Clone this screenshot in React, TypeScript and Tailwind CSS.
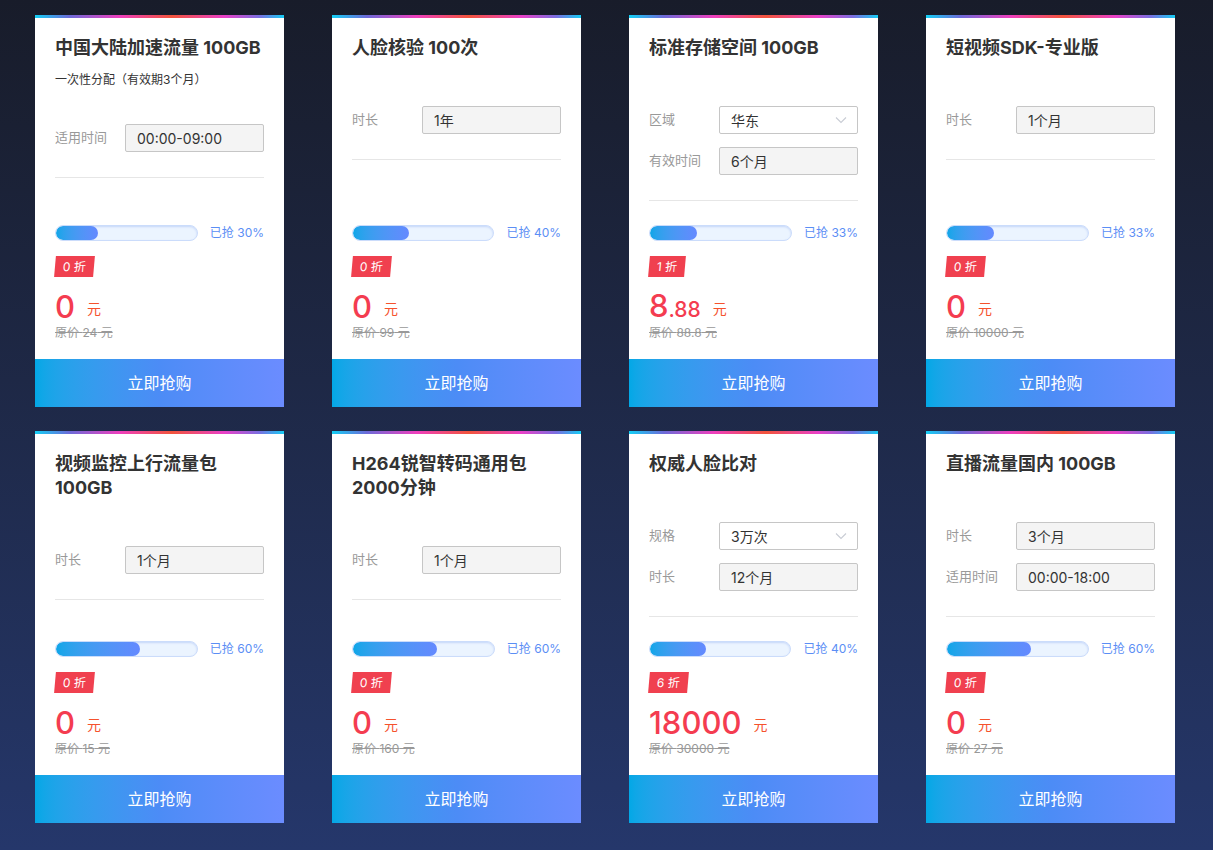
type Opt = { label: string; value: string; select?: boolean };

type Item = {
  title: string[];
  sub?: string;
  opts: Opt[];
  pct: number;
  off: string;
  price: string;
  decimal?: string;
  orig: string;
};

const items: Item[] = [
  {
    title: ["中国大陆加速流量 100GB"],
    sub: "一次性分配（有效期3个月）",
    opts: [{ label: "适用时间", value: "00:00-09:00" }],
    pct: 30,
    off: "0",
    price: "0",
    orig: "24",
  },
  {
    title: ["人脸核验 100次"],
    opts: [{ label: "时长", value: "1年" }],
    pct: 40,
    off: "0",
    price: "0",
    orig: "99",
  },
  {
    title: ["标准存储空间 100GB"],
    opts: [
      { label: "区域", value: "华东", select: true },
      { label: "有效时间", value: "6个月" },
    ],
    pct: 33,
    off: "1",
    price: "8",
    decimal: ".88",
    orig: "88.8",
  },
  {
    title: ["短视频SDK-专业版"],
    opts: [{ label: "时长", value: "1个月" }],
    pct: 33,
    off: "0",
    price: "0",
    orig: "10000",
  },
  {
    title: ["视频监控上行流量包", "100GB"],
    opts: [{ label: "时长", value: "1个月" }],
    pct: 60,
    off: "0",
    price: "0",
    orig: "15",
  },
  {
    title: ["H264锐智转码通用包", "2000分钟"],
    opts: [{ label: "时长", value: "1个月" }],
    pct: 60,
    off: "0",
    price: "0",
    orig: "160",
  },
  {
    title: ["权威人脸比对"],
    opts: [
      { label: "规格", value: "3万次", select: true },
      { label: "时长", value: "12个月" },
    ],
    pct: 40,
    off: "6",
    price: "18000",
    orig: "30000",
  },
  {
    title: ["直播流量国内 100GB"],
    opts: [
      { label: "时长", value: "3个月" },
      { label: "适用时间", value: "00:00-18:00" },
    ],
    pct: 60,
    off: "0",
    price: "0",
    orig: "27",
  },
];

const Chevron = () => (
  <svg width="12" height="8" viewBox="0 0 12 8" fill="none" className="mr-[10px]">
    <path d="M1 1.5l5 5 5-5" stroke="#c8ccd4" strokeWidth="1.1" />
  </svg>
);

const Card = ({ item }: { item: Item }) => {
  return (
    <div className="h-[392px] bg-white flex flex-col">
      <div className="h-[3px] bg-[linear-gradient(90deg,#13cff5_0%,#6d6ad8_14%,#ee3fbd_34%,#f2543c_55%,#e940c8_76%,#7a6ee0_90%,#16ccf4_100%)]" />
      <div className="px-5 pt-[18px]">
        {item.title.map((t) => (
          <div key={t} className="text-[18px] leading-[24px] font-bold text-[#333] whitespace-nowrap">
            {t}
          </div>
        ))}
        {item.sub && (
          <div className="mt-[11px] text-[12px] leading-[18px] text-[#333]">{item.sub}</div>
        )}
        <div className={item.sub ? "mt-[35px] flex flex-col gap-[13px]" : "mt-[46px] flex flex-col gap-[13px]"}>
          {item.opts.map((o) => (
            <div key={o.label} className="flex items-center">
              <div className="w-[70px] text-[13px] text-[#999]">{o.label}</div>
              <div
                className={
                  o.select
                    ? "flex-1 h-[28px] border border-[#c6c6c6] rounded-[2px] bg-white flex items-center justify-between pl-[11px] text-[14px] text-[#333]"
                    : "flex-1 h-[28px] border border-[#c6c6c6] rounded-[2px] bg-[#f4f4f4] flex items-center pl-[11px] text-[14px] text-[#333]"
                }
              >
                <span>{o.value}</span>
                {o.select && <Chevron />}
              </div>
            </div>
          ))}
        </div>
        <div className="mt-[25px] h-px bg-[#e6e6e6]" />
      </div>
      <div className="flex-1" />
      <div className="px-5 pb-[17px]">
        <div className="flex items-center gap-3">
          <div className="flex-1 h-[16px] rounded-full bg-[#ebf4ff] border border-[#cbdcfb] shadow-[inset_0_1px_2px_rgba(90,130,230,0.25)] overflow-hidden">
            <div
              className="h-full rounded-full bg-gradient-to-r from-[#0aa6e8] to-[#6489ff]"
              style={{ width: `${item.pct}%` }}
            />
          </div>
          <div className="text-[12px] text-[#5b8ef5] whitespace-nowrap">已抢 {item.pct}%</div>
        </div>
        <div className="mt-[14px] flex">
          <div className="h-[21px] px-[8px] bg-[#f0404f] -skew-x-[5deg] flex items-center text-[12px] text-white">
            {item.off} 折
          </div>
        </div>
        <div className="mt-[13px] flex items-center h-[34px] text-[#f43c50]">
          <div className="flex items-baseline">
            <span className="text-[31px] leading-[34px] font-medium">{item.price}</span>
            {item.decimal && <span className="text-[21px] font-medium">{item.decimal}</span>}
          </div>
          <span className="ml-3 mt-[2px] text-[14px] text-[#f5522d]">元</span>
        </div>
        <div className="text-[12px] leading-[18px] text-[#999] line-through">原价 {item.orig} 元</div>
      </div>
      <div className="h-[48px] bg-gradient-to-r from-[#02a8e6] via-[#4c8cf6] to-[#6b8cff] flex items-center justify-center text-white text-[16px]">
        立即抢购
      </div>
    </div>
  );
};

export default function App() {
  return (
    <div className="min-h-screen bg-gradient-to-b from-[#181c2a] to-[#25376b] pt-[15px] pl-[35px] font-['Inter','Noto_Sans_CJK_SC',sans-serif]">
      <div className="w-[1140px] grid grid-cols-4 gap-x-12 gap-y-6">
        {items.map((it) => (
          <Card key={it.title.join("")} item={it} />
        ))}
      </div>
    </div>
  );
}
